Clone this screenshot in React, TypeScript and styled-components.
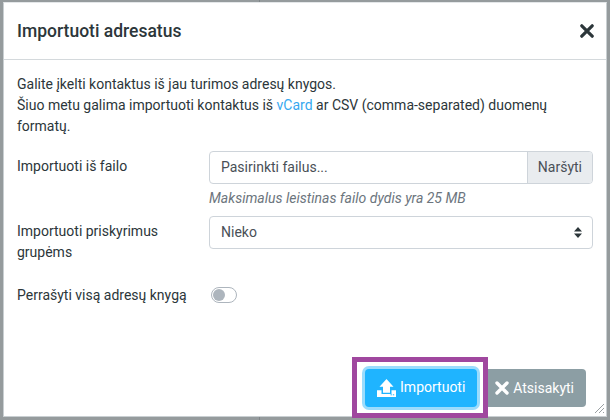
import React from "react";
import styled, { createGlobalStyle } from "styled-components";

const Global = createGlobalStyle`
  html, body { margin: 0; padding: 0; background: #959b9d; }
  body { font-family: Roboto, "Liberation Sans", sans-serif; font-size: 14px; line-height: 21px; color: #2c363a; }
`;

const Page = styled.div`
  width: 610px;
  height: 420px;
  padding: 2px 3px 3px 3px;
  box-sizing: border-box;
  overflow: hidden;
  background: linear-gradient(#7f8588, #7f8588) 259px 0 / 1px 100% no-repeat;
`;

const Modal = styled.div`
  position: relative;
  height: 100%;
  box-sizing: border-box;
  background: #fff;
  border: 1px solid #c9cfd2;
  border-top-color: #e4e7e9;
  display: flex;
  flex-direction: column;
`;

const Header = styled.div`
  height: 57px;
  flex: none;
  box-sizing: border-box;
  padding: 0 12px 0 13px;
  border-bottom: 1px solid #d4d9dc;
  display: flex;
  align-items: center;
  justify-content: space-between;
`;

const Title = styled.h5`
  margin: 0;
  font-size: 17.5px;
  line-height: 21px;
  font-weight: 500;
  color: #2c363a;
`;

const Close = styled.button`
  border: 0;
  background: none;
  padding: 0;
  width: 14px;
  height: 14px;
  display: flex;
  color: #2c363a;
`;

const Body = styled.div`
  flex: 1;
  padding: 14px 13px 0 13px;
`;

const Intro = styled.p`
  margin: 0 0 14px;
`;

const Link = styled.a`
  color: #37a8ef;
`;

const Row = styled.div<{ $gap: number }>`
  display: grid;
  grid-template-columns: 192px 384px;
  margin-bottom: ${(p) => p.$gap}px;
`;

const Label = styled.label`
  padding-top: 5px;
  padding-right: 16px;
`;

const ToggleLabel = styled.label`
  padding-top: 5px;
`;

const InputGroup = styled.div`
  display: flex;
  height: 33px;
  border: 1px solid #ced4da;
  border-radius: 4px;
  box-sizing: border-box;
  overflow: hidden;
`;

const FileName = styled.div`
  flex: 1;
  padding: 5px 11px;
  color: #495057;
`;

const Browse = styled.div`
  padding: 5px 10px;
  background: #e9ecef;
  border-left: 1px solid #ced4da;
  color: #495057;
`;

const Hint = styled.div`
  font-style: italic;
  color: #6c757d;
  margin-top: 4px;
`;

const Select = styled.div`
  height: 33px;
  box-sizing: border-box;
  border: 1px solid #ced4da;
  border-radius: 4px;
  padding: 5px 11px;
  color: #495057;
  display: flex;
  align-items: center;
  justify-content: space-between;
`;

const Carets = styled.svg`
  width: 8px;
  height: 11px;
  margin-right: -1px;
`;

const Toggle = styled.div`
  position: relative;
  width: 26px;
  height: 16px;
  margin: 7px 0 0 2px;
  box-sizing: border-box;
  border: 1px solid #adb5bd;
  border-radius: 8px;
  background: #fff;
`;

const Knob = styled.span`
  position: absolute;
  left: 1px;
  top: 1px;
  width: 12px;
  height: 12px;
  border-radius: 50%;
  background: #adb5bd;
`;

const Footer = styled.div`
  flex: none;
  display: flex;
  align-items: flex-end;
  justify-content: flex-end;
  padding: 0 20px 9px 0;
`;

const Highlight = styled.div`
  position: relative;
  z-index: 1;
  margin-right: -5px;
  margin-bottom: -11px;
  width: 136px;
  height: 61px;
  box-sizing: border-box;
  border: 5px solid #a0479f;
  padding-left: 2px;
  display: flex;
  align-items: center;
  justify-content: center;
`;

const Button = styled.button<{ $variant: "primary" | "secondary" }>`
  height: 38px;
  box-sizing: border-box;
  display: flex;
  align-items: center;
  gap: 4px;
  border: 0;
  border-radius: 4px;
  font: 14px/21px Roboto, "Liberation Sans", sans-serif;
  color: #fff;
  padding: 0 12px;
  background: ${(p) => (p.$variant === "primary" ? "#1fb4ff" : "#8c9ea4")};
  box-shadow: ${(p) => (p.$variant === "primary" ? "0 0 0 3px #9bdcfd" : "none")};
`;

const Grip = styled.svg`
  position: absolute;
  right: 1px;
  bottom: 2px;
  width: 12px;
  height: 12px;
`;

export default function App() {
  return (
    <>
      <Global />
      <Page>
        <Modal>
          <Header>
            <Title>Importuoti adresatus</Title>
            <Close aria-label="Uždaryti">
              <svg viewBox="0 0 14 14" width="14" height="14">
                <path d="M1.8 1.8 L12.2 12.2 M12.2 1.8 L1.8 12.2" stroke="currentColor" strokeWidth="3.2" strokeLinecap="round" />
              </svg>
            </Close>
          </Header>
          <Body>
            <Intro>
              Galite įkelti kontaktus iš jau turimos adresų knygos.
              <br />
              Šiuo metu galima importuoti kontaktus iš <Link>vCard</Link> ar CSV (comma-separated) duomenų
              formatų.
            </Intro>
            <Row $gap={7}>
              <Label>Importuoti iš failo</Label>
              <div>
                <InputGroup>
                  <FileName>Pasirinkti failus...</FileName>
                  <Browse>Naršyti</Browse>
                </InputGroup>
                <Hint>Maksimalus leistinas failo dydis yra 25 MB</Hint>
              </div>
            </Row>
            <Row $gap={17}>
              <Label>Importuoti priskyrimus grupėms</Label>
              <Select>
                Nieko
                <Carets viewBox="0 0 8 11">
                  <path d="M4 0 L8 4.4 H0 Z M4 11 L0 6.6 H8 Z" fill="#2c363a" />
                </Carets>
              </Select>
            </Row>
            <Row $gap={0}>
              <ToggleLabel>Perrašyti visą adresų knygą</ToggleLabel>
              <Toggle>
                <Knob />
              </Toggle>
            </Row>
          </Body>
          <Footer>
            <Highlight>
              <Button $variant="primary">
                <svg viewBox="0 0 19 18" width="19" height="18">
                  <path
                    d="M9.5 0 L16.5 7.7 H13 V13.7 H6 V7.7 H2.5 Z M0 11.3 H4.5 V15 H14.5 V11.3 H19 V18 H0 Z"
                    fill="#fff"
                  />
                  <path d="M13.5 15.8 H14.9 M15.8 15.8 H17.2" stroke="#1fb4ff" strokeWidth="1" />
                </svg>
                Importuoti
              </Button>
            </Highlight>
            <Button $variant="secondary">
              <svg viewBox="0 0 14 14" width="14" height="14">
                <path d="M2 2 L12 12 M12 2 L2 12" stroke="#fff" strokeWidth="3.4" strokeLinecap="round" />
              </svg>
              Atsisakyti
            </Button>
          </Footer>
          <Grip viewBox="0 0 12 12">
            <path d="M11 2 L2 11 M11 6 L6 11 M11 10 L10 11" stroke="#9aa0a3" strokeWidth="1" />
          </Grip>
        </Modal>
      </Page>
    </>
  );
}
